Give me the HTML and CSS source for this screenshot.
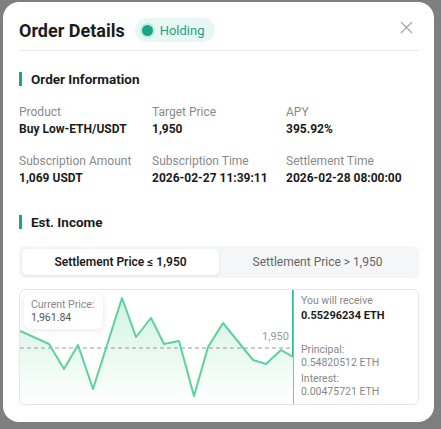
FILE: index.html
```html
<!DOCTYPE html>
<html lang="en">
<head>
  <meta charset="UTF-8" />
  <meta name="viewport" content="width=device-width, initial-scale=1" />
  <title>Order Details</title>
  <link rel="stylesheet" href="styles.css">
</head>
<body>
  <div class="modal">
    <div class="modal-header">
      <h2>Order Details</h2>
      <span class="status">
        <span class="status-dot"></span>
        Holding
      </span>
      <button class="close" aria-label="Close">
        <svg width="13" height="13" viewBox="0 0 13 13">
          <path d="M1 1L12 12M12 1L1 12" stroke="#a8a8a8" stroke-width="1.3" fill="none" />
        </svg>
      </button>
    </div>

    <h3 class="section-title">Order Information</h3>
    <div class="info-grid">
      <div class="info-item">
        <span class="info-label">Product</span>
        <span class="info-value">Buy Low-ETH/USDT</span>
      </div>
      <div class="info-item">
        <span class="info-label">Target Price</span>
        <span class="info-value">1,950</span>
      </div>
      <div class="info-item">
        <span class="info-label">APY</span>
        <span class="info-value">395.92%</span>
      </div>
      <div class="info-item">
        <span class="info-label">Subscription Amount</span>
        <span class="info-value">1,069 USDT</span>
      </div>
      <div class="info-item">
        <span class="info-label">Subscription Time</span>
        <span class="info-value">2026-02-27 11:39:11</span>
      </div>
      <div class="info-item">
        <span class="info-label">Settlement Time</span>
        <span class="info-value">2026-02-28 08:00:00</span>
      </div>
    </div>

    <h3 class="section-title">Est. Income</h3>
    <div class="tabs">
      <div class="tab active">Settlement Price ≤ 1,950</div>
      <div class="tab">Settlement Price &gt; 1,950</div>
    </div>

    <div class="chart-box">
      <div class="chart">
        <svg width="273" height="114" viewBox="0 0 273 114">
          <defs>
            <linearGradient id="areaFill" x1="0" y1="0" x2="0" y2="1">
              <stop offset="0" stop-color="#5fd3a0" stop-opacity="0.28" />
              <stop offset="1" stop-color="#5fd3a0" stop-opacity="0" />
            </linearGradient>
          </defs>
          <path d="M0 41L29 54L44 79L58 55L73 99L102 8L116 47L131 28L144 54L159 51L174 106L188 57L203 33L233 70L246 74L261 60L273 67L273 114L0 114Z" fill="url(#areaFill)" />
          <line x1="0" y1="58" x2="273" y2="58" stroke="#9a9a9a" stroke-width="1" stroke-dasharray="4 3" />
          <path d="M0 41L29 54L44 79L58 55L73 99L102 8L116 47L131 28L144 54L159 51L174 106L188 57L203 33L233 70L246 74L261 60L273 67" fill="none" stroke="#5dd19c" stroke-width="2" stroke-linejoin="round" />
          <text x="269" y="50" text-anchor="end" class="target-label">1,950</text>
        </svg>
        <div class="tooltip">
          <span>Current Price:</span>
          <span>1,961.84</span>
        </div>
      </div>
      <div class="receive">
        <span class="muted">You will receive</span>
        <span class="receive-total">0.55296234 ETH</span>
        <div class="receive-detail">
          <span class="muted">Principal:</span>
          <span class="muted">0.54820512 ETH</span>
          <span class="muted gap">Interest:</span>
          <span class="muted">0.00475721 ETH</span>
        </div>
      </div>
    </div>
  </div>
</body>
</html>
```

FILE: styles.css
```css
body {
  margin: 0;
  background: #7f7f7f;
  font-family: Roboto, 'Noto Sans', sans-serif;
  color: #1c1c1c;
}

.modal {
  width: 431px;
  height: 420px;
  margin: 2px 0 0 3px;
  box-sizing: border-box;
  background: #fff;
  border-radius: 16px;
  padding: 0 15px 0 16px;
}

.modal-header {
  display: flex;
  align-items: center;
  height: 48px;
  border-bottom: 1px solid #e8e8e8;
  gap: 10px;
}

.modal-header h2 {
  margin: 0;
  font-size: 18px;
  font-weight: 700;
  padding-top: 8px;
}

.status {
  display: flex;
  align-items: center;
  gap: 7px;
  height: 24px;
  padding: 0 10px 0 7px;
  margin-top: 8px;
  border-radius: 12px;
  background: #e8f7f3;
  color: #2a9d86;
  font-size: 13px;
}

.status-dot {
  width: 11px;
  height: 11px;
  border-radius: 50%;
  background: #1aa58a;
  box-shadow: 0 0 0 2px #c2ebe0;
}

.close {
  margin-left: auto;
  margin-right: 6px;
  margin-top: 2px;
  border: none;
  background: none;
  padding: 0;
  display: flex;
  cursor: pointer;
}

.section-title {
  margin: 21px 0 0;
  padding-left: 9px;
  border-left: 3px solid #1aa58a;
  font-size: 13.5px;
  font-weight: 700;
  line-height: 14px;
  height: 14px;
}

.info-grid {
  display: grid;
  grid-template-columns: 133px 134px 1fr;
  row-gap: 16px;
  margin-top: 18px;
}

.info-item {
  display: flex;
  flex-direction: column;
  gap: 1px;
}

.info-label {
  font-size: 12px;
  color: #8a8a8a;
  line-height: 16px;
}

.info-value {
  font-size: 12px;
  font-weight: 700;
  line-height: 16px;
}

.info-grid + .section-title {
  margin-top: 29px;
}

.tabs {
  display: flex;
  margin-top: 17px;
  padding: 3px;
  background: #f5f6f7;
  border-radius: 6px;
}

.tab {
  flex: 1;
  height: 26px;
  display: flex;
  align-items: center;
  justify-content: center;
  font-size: 12px;
  color: #666;
}

.tab.active {
  background: #fff;
  border-radius: 5px;
  box-shadow: 0 1px 3px rgba(0, 0, 0, 0.08);
  color: #1c1c1c;
  font-weight: 600;
}

.chart-box {
  display: flex;
  margin-top: 11px;
  height: 116px;
  box-sizing: border-box;
  border: 1px solid #e6e6e6;
  border-radius: 6px;
}

/* teal part of the divider above the last price, orange below */
.chart {
  position: relative;
  width: 273px;
  border-right: 1px solid #e3a73a;
  background: linear-gradient(#2fb79a, #2fb79a) right top / 1px 67px no-repeat;
}

.chart svg {
  display: block;
}

.target-label {
  font-size: 11px;
  fill: #999;
  font-family: Roboto, sans-serif;
}

.tooltip {
  position: absolute;
  left: 4px;
  top: 4px;
  display: flex;
  flex-direction: column;
  padding: 4px 9px 5px 7px;
  background: #fff;
  border-radius: 6px;
  box-shadow: 0 1px 6px rgba(0, 0, 0, 0.1);
  font-size: 10.5px;
  line-height: 13px;
  color: #888;
}

.tooltip span + span {
  color: #555;
}

.receive {
  display: flex;
  flex-direction: column;
  padding: 4px 0 0 7px;
  font-size: 10.5px;
  line-height: 14px;
}

.muted {
  color: #888;
}

.receive-total {
  font-weight: 700;
  font-size: 11px;
  margin-top: 1px;
}

.receive-detail {
  display: flex;
  flex-direction: column;
  margin-top: 20px;
  line-height: 13px;
}

.receive-detail .gap {
  margin-top: 3px;
}
```
